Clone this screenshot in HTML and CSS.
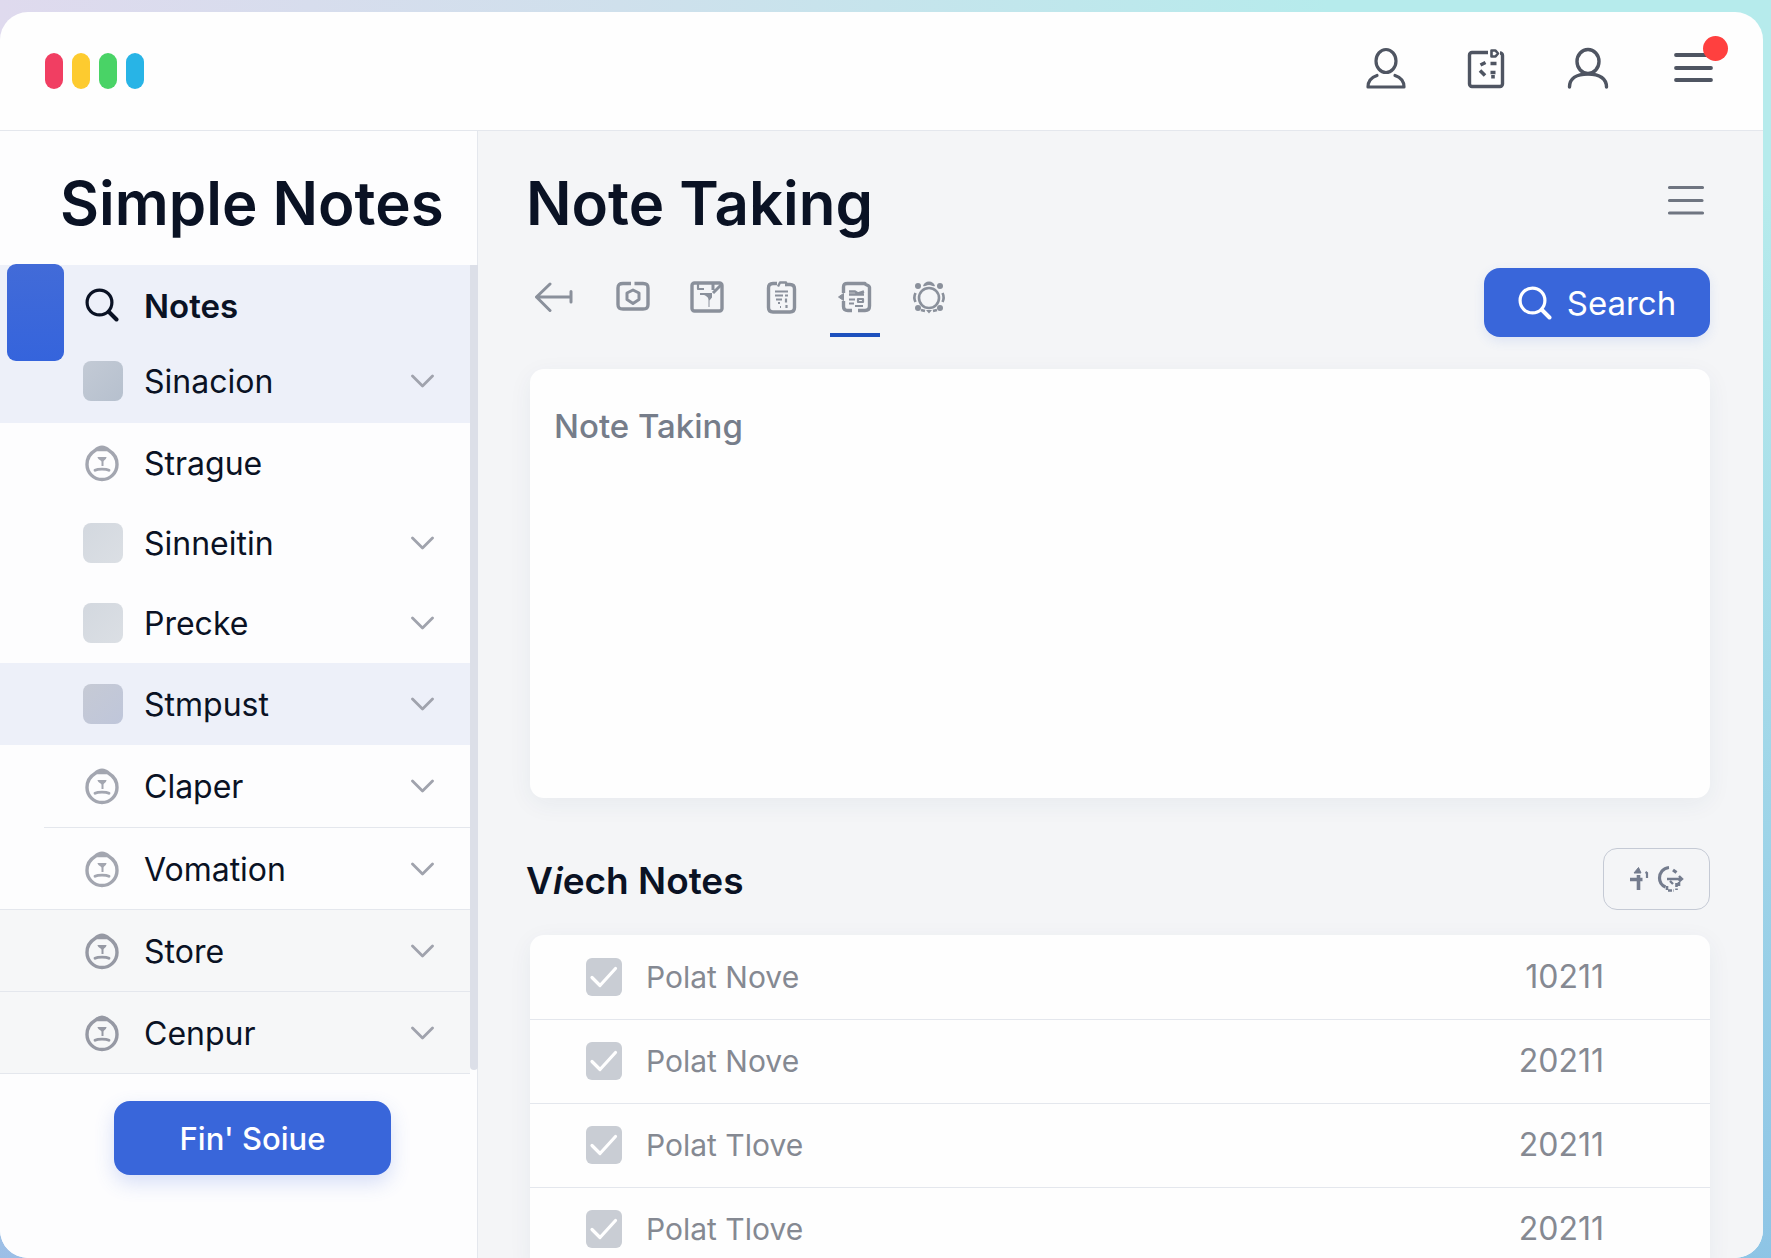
FILE: index.html
```html
<!DOCTYPE html>
<html lang="en">
<head>
<meta charset="utf-8">
<meta name="viewport" content="width=device-width, initial-scale=1">
<title>Simple Notes</title>
<link rel="stylesheet" href="styles.css">
</head>
<body>
<svg class="sprite" aria-hidden="true">
  <symbol id="chevron" viewBox="0 0 24 14"><path d="M2.500 2l10 10 10-10" fill="none" stroke="currentColor" stroke-width="2.800" stroke-linecap="round" stroke-linejoin="round"/></symbol>
  <symbol id="lens" viewBox="0 0 34 34"><g fill="none" stroke="currentColor" stroke-linecap="round"><circle cx="14.500" cy="14.500" r="12.400" stroke-width="3.200"/><path d="M24 24l7.500 7.500" stroke-width="4"/></g></symbol>
  <symbol id="stamp" viewBox="0 0 36 38"><path d="M18 3.200c-3 0-4.800 1.300-7 3.300C6 9.500 3 14.500 3 20.500a15 15 0 0 0 30 0c0-6-3-11-8-14-2.200-2-4-3.300-7-3.300z" fill="none" stroke="currentColor" stroke-width="3.400"/><path d="M14 6.500c2-2.500 6-2.500 8 0z" fill="currentColor" stroke="currentColor" stroke-width="1.500"/><path d="M13.500 13h9c0 2.500-3 3-3 5v4h-2v-4c0-2-4-2.500-4-5z" fill="currentColor"/><path d="M11 26.300c3-1.600 11-1.600 14 0" fill="none" stroke="currentColor" stroke-width="2.800" stroke-linecap="round"/></symbol>
</svg>

<div class="frame">
  <header class="topbar">
    <div class="logo" role="img" aria-label="Simple Notes"><span class="pill red"></span><span class="pill yellow"></span><span class="pill green"></span><span class="pill blue"></span></div>
    <nav class="top-actions" aria-label="Account">
      <button class="icon-btn" aria-label="Profile"><svg width="44" height="48" viewBox="0 0 44 48" fill="none" stroke="currentColor" stroke-width="3.200" stroke-linecap="round" stroke-linejoin="round"><ellipse cx="22" cy="14" rx="10" ry="11.500"/><path d="M13 28.500C7 30.500 4 34 4 40h36c0-6-3-9.500-9-11.500"/></svg></button>
      <button class="icon-btn" aria-label="Calendar"><svg width="44" height="48" viewBox="0 0 44 48" fill="none" stroke="currentColor" stroke-width="3.400" stroke-linejoin="round"><path d="M23 5.500H7A2.500 2.500 0 0 0 4.500 8v29A2.500 2.500 0 0 0 7 39.500h28a2.500 2.500 0 0 0 2.500-2.500V8.500c0-1.500-1-2.500-2.500-2.500"/><path d="M26.500 3.500h4l2.500 3L30.500 9.500h-4z" stroke-width="2.600"/><path d="M20.500 15.500l-5 2.500M25.500 16.500h6M20 28.500l-5-5M25.500 25.500h5M28 28v3.500" stroke-width="3.600"/></svg></button>
      <button class="icon-btn" aria-label="Contacts"><svg width="44" height="48" viewBox="0 0 44 48" fill="none" stroke="currentColor" stroke-width="3.400" stroke-linecap="round"><ellipse cx="22" cy="14.500" rx="11" ry="12"/><path d="M3.500 40C3.500 32 10 27 22 27s18.500 5 18.500 13"/></svg></button>
      <button class="icon-btn menu" aria-label="Menu"><svg width="52" height="48" viewBox="0 0 52 48" fill="none" stroke="currentColor" stroke-width="3.800" stroke-linecap="round"><path d="M9 8h34M9 21h35M9 33h35"/></svg><span class="badge"></span></button>
    </nav>
  </header>

  <div class="body">
    <aside class="sidebar">
      <h1 class="brand">Simple Notes</h1>
      <nav class="nav-wrap" aria-label="Folders">
        <span class="marker"></span>
        <ul class="nav">
          <li class="active-group">
            <a class="row current" href="#"><svg class="ico" width="34" height="34"><use href="#lens"/></svg><span>Notes</span></a>
            <a class="row" href="#"><i class="tile steel"></i><span>Sinacion</span><svg class="chev" width="24" height="14"><use href="#chevron"/></svg></a>
          </li>
          <li><a class="row mid" href="#"><svg class="ico stamp" width="36" height="38"><use href="#stamp"/></svg><span>Strague</span></a></li>
          <li><a class="row mid" href="#"><i class="tile"></i><span>Sinneitin</span><svg class="chev" width="24" height="14"><use href="#chevron"/></svg></a></li>
          <li><a class="row mid" href="#"><i class="tile"></i><span>Precke</span><svg class="chev" width="24" height="14"><use href="#chevron"/></svg></a></li>
          <li><a class="row tall tinted" href="#"><i class="tile violet"></i><span>Stmpust</span><svg class="chev" width="24" height="14"><use href="#chevron"/></svg></a></li>
          <li class="inset-rule"><a class="row tall" href="#"><svg class="ico stamp" width="36" height="38"><use href="#stamp"/></svg><span>Claper</span><svg class="chev" width="24" height="14"><use href="#chevron"/></svg></a></li>
          <li><a class="row tall ruled" href="#"><svg class="ico stamp" width="36" height="38"><use href="#stamp"/></svg><span>Vomation</span><svg class="chev" width="24" height="14"><use href="#chevron"/></svg></a></li>
          <li><a class="row tall ruled grey" href="#"><svg class="ico stamp" width="36" height="38"><use href="#stamp"/></svg><span>Store</span><svg class="chev" width="24" height="14"><use href="#chevron"/></svg></a></li>
          <li><a class="row tall ruled grey" href="#"><svg class="ico stamp" width="36" height="38"><use href="#stamp"/></svg><span>Cenpur</span><svg class="chev" width="24" height="14"><use href="#chevron"/></svg></a></li>
        </ul>
        <span class="thumb"></span>
      </nav>
      <button class="primary wide">Fin' Soiue</button>
    </aside>

    <main class="main">
      <div class="head">
        <h2 class="title">Note Taking</h2>
        <button class="icon-btn soft" aria-label="Options"><svg width="48" height="48" viewBox="0 0 48 48" fill="none" stroke="currentColor" stroke-width="3.200" stroke-linecap="round"><path d="M7.500 8.500h33M7.500 21.500h32.500M7.500 34h33"/></svg></button>
      </div>

      <div class="toolbar">
        <div class="tools">
          <button class="tool back" aria-label="Back"><svg width="40" height="36" viewBox="0 0 40 36" fill="none" stroke="currentColor" stroke-width="3" stroke-linecap="round" stroke-linejoin="round"><path d="M15 5L1.500 18 15 31.500M1.500 18h34.500M36 12.500v10.500"/></svg></button>
          <button class="tool" aria-label="Image"><svg width="36" height="36" viewBox="0 0 36 36" fill="none" stroke="currentColor" stroke-width="3.400" stroke-linejoin="round"><path d="M16 4.500H8c-3.500 0-5 1-5 4.500v16.500C3 29 4.500 30 8 30h20c3.500 0 5-1 5-4.500V9c0-3.500-1.500-4.500-5-4.500h-8.500"/><path d="M18 11l6 3v6.500l-6 4-6-4V14z" stroke-width="3"/></svg></button>
          <button class="tool" aria-label="Save"><svg width="36" height="36" viewBox="0 0 36 36" fill="none" stroke="currentColor" stroke-width="3.400" stroke-linejoin="round"><rect x="3" y="4" width="30" height="28" rx="2.500"/><path d="M9 5v5h6M11 15h12" stroke-width="2.200"/><path d="M24 5v6M32 6l-8 8" stroke-width="3"/><path d="M14 15.500h9v3l-2.500 3V28h-1v-7c0-3-2.500-4-5.500-5.500z" fill="currentColor" stroke="none"/></svg></button>
          <button class="tool" aria-label="Clipboard"><svg width="36" height="36" viewBox="0 0 36 36" fill="none" stroke="currentColor" stroke-width="3.400" stroke-linejoin="round"><path d="M14 4.500h-4c-3 0-4.500 1.500-4.500 4.500v19.500c0 3 1.500 4.500 4.500 4.500h17c3 0 4.500-1.500 4.500-4.500V10c0-3-1.500-4.500-4.500-4.500H22"/><path d="M15 7.500l2-4h6l1 3.500" stroke-width="2.400"/><path d="M12 12.500h13M12 16.500h8M22 16.500h3M13 20.500h6M23 19.500v4M15 24h2M17 28h1M23.500 26v3" stroke-width="2.200"/></svg></button>
          <button class="tool selected" aria-label="Notebook" aria-pressed="true"><svg width="36" height="36" viewBox="0 0 36 36" fill="none" stroke="currentColor" stroke-width="3.400" stroke-linejoin="round"><path d="M6.500 14V8c0-2.500 1-3.500 4-3.500H28c0 1.500 4.500 1.500 4.500 4V27c0 3-1.500 4.500-4.500 4.500h-7M15 31.500h-4c-3 0-4.500-1.500-4.500-4V22"/><path d="M1.500 18l5-3.500v7z" fill="currentColor" stroke-width="1"/><path d="M12 12.500h6l3 2 6-2M12 15.500h15" stroke-width="2.600"/><path d="M12 20.500h6M21 20h5v3h-5zM12 24.500h5M18 27h8" stroke-width="2.200"/></svg></button>
          <button class="tool" aria-label="Settings"><svg width="36" height="36" viewBox="0 0 36 36" fill="none" stroke="currentColor"><circle cx="18" cy="19" r="10" stroke-width="2.600"/><g fill="currentColor" stroke="none"><circle cx="7" cy="7" r="3"/><circle cx="29" cy="7" r="3"/><circle cx="7" cy="29" r="3"/><circle cx="29" cy="29" r="3"/><path d="M12 7c1-3 3-4.500 6-4.500S23 4 24 7c-2 1-3-1-6-1s-4 2-6 1zM15 31l3 3.500 3-3.500z"/></g><path d="M4.500 14c-1.500 3-1.500 6 0 9M31.500 14c1.500 3 1.500 6 0 9M10 31l4 1M26 31l-4 1" stroke-width="2.600"/></svg></button>
        </div>
        <button class="primary search"><svg width="34" height="34"><use href="#lens"/></svg>Search</button>
      </div>

      <textarea class="card editor" aria-label="Note" placeholder="Note Taking"></textarea>

      <div class="subhead">
        <h3 class="subtitle">V<i>i</i>ech Notes</h3>
        <button class="outline" aria-label="Add or sync"><svg width="56" height="28" viewBox="0 0 56 28" fill="none" stroke="currentColor" stroke-width="3"><path d="M1 14.500h12.500M9.500 10v15" stroke-width="3.600"/><path d="M5 8l4.500-5.500L12 8z" fill="currentColor" stroke-width="1"/><path d="M16.500 7l1.500 1v5" stroke-width="2.200"/><path d="M40 2.500C34 3 30.500 8 30.500 13c0 4.500 2.500 7.500 6 9M44 5l3.500 2.500" stroke-width="3.200"/><path d="M38 14h15M50 11l3 3-3 2.500M41 16l3 3" stroke-width="2.400"/><path d="M38 21v4.500h7M47.500 18v7M50 17v5" stroke-width="2.600" stroke-dasharray="4 1.500"/></svg></button>
      </div>

      <table class="card notes">
        <tbody>
          <tr><td class="pick"><input type="checkbox" id="n1" checked></td><td><label for="n1">Polat Nove</label></td><td class="num">10211</td></tr>
          <tr><td class="pick"><input type="checkbox" id="n2" checked></td><td><label for="n2">Polat Nove</label></td><td class="num">20211</td></tr>
          <tr><td class="pick"><input type="checkbox" id="n3" checked></td><td><label for="n3">Polat Tlove</label></td><td class="num">20211</td></tr>
          <tr><td class="pick"><input type="checkbox" id="n4" checked></td><td><label for="n4">Polat Tlove</label></td><td class="num">20211</td></tr>
        </tbody>
      </table>
    </main>
  </div>
</div>
</body>
</html>
```
FILE: styles.css
```css
:root {
  --ink: #0a1224;
  --blue: #3966da;
  --line: #e4e7ed;
  --tint: #edf0f9;
}

* { box-sizing: border-box; }

body {
  margin: 0;
  padding: 12px 8px 0 0;
  height: 100vh;
  overflow: hidden;
  font-family: Inter, "Liberation Sans", sans-serif;
  font-size: 32px;
  line-height: 40px;
  color: var(--ink);
  background:
    linear-gradient(to bottom, rgba(120, 176, 226, 0) 15%, rgba(120, 176, 226, .65)),
    linear-gradient(to right, #dfdaee, #cfe0ec 35%, #b6ebec 75%);
}

h1, h2, h3, ul { margin: 0; padding: 0; }
ul { list-style: none; }
a { color: inherit; text-decoration: none; }
svg { display: block; flex: none; }
.sprite { position: absolute; width: 0; height: 0; }

button {
  font: inherit;
  color: inherit;
  padding: 0;
  border: 0;
  background: none;
  cursor: pointer;
}

.frame {
  height: 100%;
  display: flex;
  flex-direction: column;
  overflow: hidden;
  border-radius: 28px;
  background: #fefefe;
}

/* Top bar */
.topbar {
  flex: none;
  height: 119px;
  display: flex;
  align-items: center;
  justify-content: space-between;
  padding: 0 44px 0 45px;
  border-bottom: 1px solid var(--line);
}
.logo { display: flex; gap: 9px; }
.pill { width: 18px; height: 36px; border-radius: 9px; }
.red { background: #f13e62; }
.yellow { background: #fdcb2f; }
.green { background: #49d366; }
.blue { background: #28b4e6; }
.top-actions { display: flex; gap: 57px; color: #4f5562; }
.icon-btn { position: relative; }
.icon-btn.soft { color: #6f7581; }
.badge {
  position: absolute;
  top: -11px;
  right: -9px;
  width: 25px;
  height: 25px;
  border-radius: 50%;
  background: #ff403f;
}

.body {
  flex: 1;
  min-height: 0;
  display: grid;
  grid-template-columns: 478px 1fr;
}

/* Sidebar */
.sidebar {
  border-right: 1px solid var(--line);
  background: #fdfdfe;
}
.brand, .title { font-size: 60px; line-height: 76px; font-weight: 600; }
.brand { padding: 34px 0 24px 60px; }
.nav-wrap { position: relative; }
.nav { padding-right: 7px; }
.active-group { padding: 2px 0 4px; background: var(--tint); }
.row {
  height: 76px;
  display: flex;
  align-items: center;
  padding: 0 36px 0 83px;
}
.row > span { flex: 1; padding-top: 2px; }
.row > :first-child { margin-right: 21px; }
.row > .ico { margin-left: 2px; margin-right: 25px; }
.row > .stamp { color: #a3a6b0; margin-left: 1px; margin-right: 24px; }
.current { font-size: 33px; font-weight: 600; }
.mid { height: 80px; }
.tall { height: 82px; }
.tinted { background: var(--tint); }
.ruled { border-bottom: 1px solid var(--line); }
.grey { background: #f6f7f8; }
.grey > .stamp { color: #9699a4; }
.inset-rule {
  padding-bottom: 1px;
  background: linear-gradient(var(--line), var(--line)) 44px 100% / 100% 1px no-repeat;
}
.tile {
  width: 40px;
  height: 40px;
  border-radius: 8px;
  background: linear-gradient(135deg, #d3d8df, #dbdfe4);
}
.steel { background: linear-gradient(135deg, #c3cad5, #b6c0ce); }
.violet { background: linear-gradient(135deg, #c6cad5, #bfc6da); }
.chev { color: #a0a3ad; }
.marker {
  position: absolute;
  top: -1px;
  left: 7px;
  width: 57px;
  height: 97px;
  border-radius: 9px;
  background: linear-gradient(#426bd8, #3564dc);
}
.thumb {
  position: absolute;
  top: 0;
  right: -1px;
  bottom: 4px;
  width: 8px;
  border-radius: 0 0 4px 4px;
  background: #dcdfe8;
}

.primary {
  display: flex;
  align-items: center;
  justify-content: center;
  gap: 15px;
  color: #fff;
  background: var(--blue);
  border-radius: 16px;
}
.wide {
  width: 277px;
  height: 74px;
  margin: 27px 0 0 114px;
  padding-top: 2px;
  font-size: 31px;
  font-weight: 500;
  box-shadow: 0 8px 20px rgba(60, 100, 220, .2);
}

/* Main column */
.main {
  padding: 34px 53px 0 48px;
  background: #f4f5f7;
  overflow: hidden;
}
.head, .toolbar, .subhead {
  display: flex;
  align-items: center;
  justify-content: space-between;
}
.toolbar { align-items: flex-end; margin-top: 20px; }
.tools { display: flex; gap: 24px; color: #8a909b; }
.tool {
  width: 50px;
  height: 76px;
  display: grid;
  place-items: center;
  border-bottom: 4px solid transparent;
}
.back { width: 58px; }
.selected { border-color: #1d50bd; }
.search {
  width: 226px;
  height: 69px;
  font-size: 33px;
  box-shadow: 0 4px 12px rgba(60, 110, 220, .12);
}

.card {
  display: block;
  width: calc(100% - 4px);
  margin-left: 4px;
  border: 0;
  border-radius: 14px;
  background: #fefefe;
  box-shadow: 0 6px 24px rgba(40, 60, 100, .06);
}
.editor {
  height: 429px;
  margin-top: 32px;
  padding: 37px 24px;
  font: inherit;
  font-size: 33px;
  font-weight: 500;
  color: var(--ink);
  resize: none;
  outline: 0;
}
.editor::placeholder { color: #767d8a; opacity: 1; }

.subhead { margin: 50px 0 25px; }
.subtitle { padding-top: 4px; font-size: 37px; line-height: 48px; font-weight: 600; }
.outline {
  width: 107px;
  height: 62px;
  display: grid;
  place-items: center;
  color: #747c8e;
  border: 1px solid #c5cad5;
  border-radius: 14px;
}

.notes { display: table; border-collapse: collapse; color: #858992; }
.notes tr + tr td { border-top: 1px solid var(--line); }
.notes td { height: 84px; padding: 0; }
.notes .pick { width: 116px; padding-left: 56px; }
.notes label { font-size: 30px; }
.notes .num { padding-right: 106px; text-align: right; }
.notes input {
  appearance: none;
  display: block;
  width: 36px;
  height: 38px;
  margin: 0;
  border-radius: 6px;
  background: #c9cdd4;
}
.notes input:checked {
  background-image: url("data:image/svg+xml,%3Csvg xmlns='http://www.w3.org/2000/svg' viewBox='0 0 36 38'%3E%3Cpath d='M6 19.500l8 8 15.500-17' fill='none' stroke='%23fff' stroke-width='3.200' stroke-linecap='round' stroke-linejoin='round'/%3E%3C/svg%3E");
}
```
